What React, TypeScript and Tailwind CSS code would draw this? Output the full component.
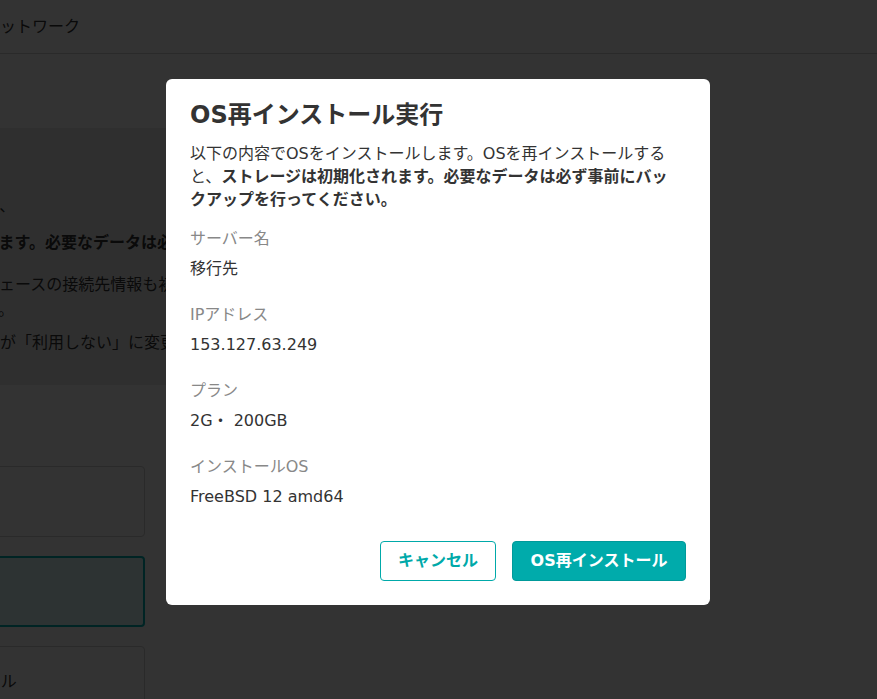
import React from 'react';

const font = { fontFamily: '"DejaVu Sans", "Noto Sans CJK JP", sans-serif' };

const details = [
  { label: 'サーバー名', value: '移行先' },
  { label: 'IPアドレス', value: '153.127.63.249' },
  { label: 'プラン', value: '2G・ 200GB' },
  { label: 'インストールOS', value: 'FreeBSD 12 amd64' },
];

const App: React.FC = () => {
  return (
    <div className="relative h-[699px] w-[877px] overflow-hidden bg-white text-[#333]" style={font}>
      {/* Page behind the modal */}
      <div className="h-[54px] border-b border-[#d2d2d2] flex items-center">
        <span className="ml-[-16px] text-[16px] leading-6">ネットワーク</span>
      </div>

      <div className="ml-[-256px] w-[700px] pt-[74px]">
        <div className="bg-[#ececec] h-[257px] pt-[65px] text-[16px] leading-[25px]">
          <p>再インストールの完了後は自動的に、</p>
          <p className="mt-3 font-bold">ディスクのストレージは初期化されます。必要なデータは必ず事前に</p>
          <p className="mt-[17px]">
            ご利用中のネットワークインターフェースの接続先情報も初期化され
            <br />
            ますので、再設定を行ってください。
          </p>
          <p className="mt-2">また、ローカルネットワークの設定が「利用しない」に変更されます。</p>
        </div>
      </div>

      <div className="ml-[-96px] w-[241px] mt-[81px] flex flex-col gap-[19px]">
        <div className="h-[71px] rounded border border-[#d0d0d0] flex items-center px-4">CentOS</div>
        <div className="h-[71px] rounded border-2 border-[#00b4b4] bg-[#e2ffff] flex items-center px-4">Ubuntu</div>
        <div className="h-[71px] rounded border border-[#d0d0d0] flex items-center px-4 text-[16px]">インストール</div>
      </div>

      {/* Overlay */}
      <div className="absolute inset-0 bg-black/80" />

      {/* Dialog */}
      <div className="absolute left-[166px] top-[79px] w-[544px] rounded-md bg-white px-6 pt-5 pb-[24px]">
        <h2 className="text-[24px] leading-8 font-bold text-[#333]">OS再インストール実行</h2>
        <p className="mt-[11px] text-[16px] leading-[23px] text-[#333]">
          以下の内容でOSをインストールします。OSを再インストールする
          <br />
          と、<span className="font-bold">ストレージは初期化されます。必要なデータは必ず事前にバッ</span>
          <br />
          <span className="font-bold">クアップを行ってください。</span>
        </p>

        <div className="mt-4 flex flex-col gap-[22px]">
          {details.map((d) => (
            <div key={d.label} className="flex flex-col gap-[6px] text-[16px] leading-6">
              <span className="text-[#888]">{d.label}</span>
              <span className="text-[#333]">{d.value}</span>
            </div>
          ))}
        </div>

        <div className="mt-8 flex justify-end gap-4">
          <button className="h-10 w-[116px] rounded border border-[#00a9a9] bg-white text-[16px] font-bold text-[#00a9a9]">
            キャンセル
          </button>
          <button className="h-10 w-[174px] rounded border border-[#009a9a] bg-[#00abab] text-[16px] font-bold text-white">
            OS再インストール
          </button>
        </div>
      </div>
    </div>
  );
};

export default App;
